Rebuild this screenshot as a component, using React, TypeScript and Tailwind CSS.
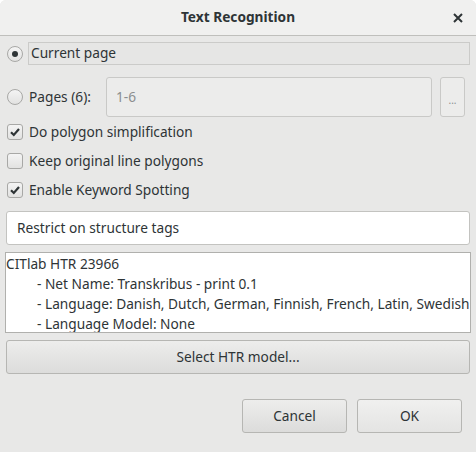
import React from 'react'

function Radio({ checked }: { checked?: boolean }) {
  return (
    <span className="flex h-[16px] w-[16px] shrink-0 items-center justify-center rounded-full border border-[#a8a8a6] bg-gradient-to-b from-[#f4f4f4] to-[#e2e2e1]">
      {checked && <span className="h-[6px] w-[6px] rounded-full bg-[#2e3436]" />}
    </span>
  )
}

function Check({ checked }: { checked?: boolean }) {
  return (
    <span className="flex h-[16px] w-[16px] shrink-0 items-center justify-center rounded-[3px] border border-[#a8a8a6] bg-gradient-to-b from-[#f4f4f4] to-[#e2e2e1]">
      {checked && (
        <svg width="12" height="12" viewBox="0 0 12 12">
          <path d="M2 6.2 L4.8 9 L10 3" fill="none" stroke="#2e3436" strokeWidth="2.2" />
        </svg>
      )}
    </span>
  )
}

const modelLines = [
  '- Net Name: Transkribus - print 0.1',
  '- Language: Danish, Dutch, German, Finnish, French, Latin, Swedish',
  '- Language Model: None'
]

export default function App() {
  return (
    <div className="h-[452px] w-[476px] bg-white text-[13.7px] text-[#2e3436]" style={{ fontFamily: '"Noto Sans", sans-serif' }}>
      <div className="flex h-full flex-col overflow-hidden rounded-t-[6px] bg-[#e8e8e7]">
        {/* Title bar */}
        <div className="relative flex h-[36px] shrink-0 items-center justify-center border-b border-[#bfbfbc] bg-[#f0f0ef]">
          <span className="font-bold">Text Recognition</span>
          <svg className="absolute right-[13px] top-[13px]" width="10" height="10" viewBox="0 0 10 10">
            <path d="M1 1 L9 9 M9 1 L1 9" stroke="#2e3436" strokeWidth="2" />
          </svg>
        </div>

        <div className="flex flex-col px-[6px]">
          {/* Current page */}
          <div className="mt-[6px] flex h-[23px] items-center gap-[5px] pl-[1px]">
            <Radio checked />
            <div className="flex h-[23px] flex-1 items-center border border-[#cbcbc9] bg-[#e6e6e5] pl-[2px]">Current page</div>
          </div>

          {/* Pages */}
          <div className="mt-[12px] flex h-[40px] items-center pl-[1px]">
            <Radio />
            <span className="ml-[6px] w-[77px]">Pages (6):</span>
            <div className="flex h-[40px] flex-1 items-center rounded-[3px] border border-[#c9c9c7] bg-[#ececeb] pl-[9px] text-[#8b8e8f]">1-6</div>
            <div className="ml-[8px] flex h-[40px] w-[25px] items-center justify-center rounded-[3px] border border-[#c9c9c7] bg-[#ececeb] pt-[6px] text-[10px] text-[#8b8e8f]">...</div>
            <div className="w-[5px]" />
          </div>

          {/* Checkboxes */}
          <div className="mt-[7px] flex flex-col gap-[13px] pl-[1px]">
            <label className="flex h-[16px] items-center gap-[6px]"><Check checked />Do polygon simplification</label>
            <label className="flex h-[16px] items-center gap-[6px]"><Check />Keep original line polygons</label>
            <label className="flex h-[16px] items-center gap-[6px]"><Check checked />Enable Keyword Spotting</label>
          </div>

          {/* Restrict */}
          <div className="mt-[13px] flex h-[34px] items-center rounded-[3px] border border-[#c3c3c0] bg-white pl-[10px]">Restrict on structure tags</div>

          {/* Model description */}
          <div className="mx-[-1px] mt-[7px] flex h-[81px] flex-col overflow-hidden border border-[#b0b0ad] bg-white pt-[1px] leading-[20px] whitespace-nowrap">
            <div>CITlab HTR 23966</div>
            {modelLines.map((l) => (
              <div key={l} className="pl-[31px]">{l}</div>
            ))}
          </div>

          <button className="mt-[7px] h-[34px] rounded-[3px] border border-[#b6b6b3] bg-gradient-to-b from-[#ededec] to-[#dcdcdb]">Select HTR model...</button>

          {/* Buttons */}
          <div className="mt-[25px] flex justify-end gap-[10px] pr-[8px]">
            <button className="h-[34px] w-[105px] rounded-[3px] border border-[#b6b6b3] bg-gradient-to-b from-[#ededec] to-[#dcdcdb]">Cancel</button>
            <button className="h-[34px] w-[105px] rounded-[3px] border border-[#b6b6b3] bg-gradient-to-b from-[#f0f0ef] to-[#e4e4e3]">OK</button>
          </div>
        </div>
      </div>
    </div>
  )
}
